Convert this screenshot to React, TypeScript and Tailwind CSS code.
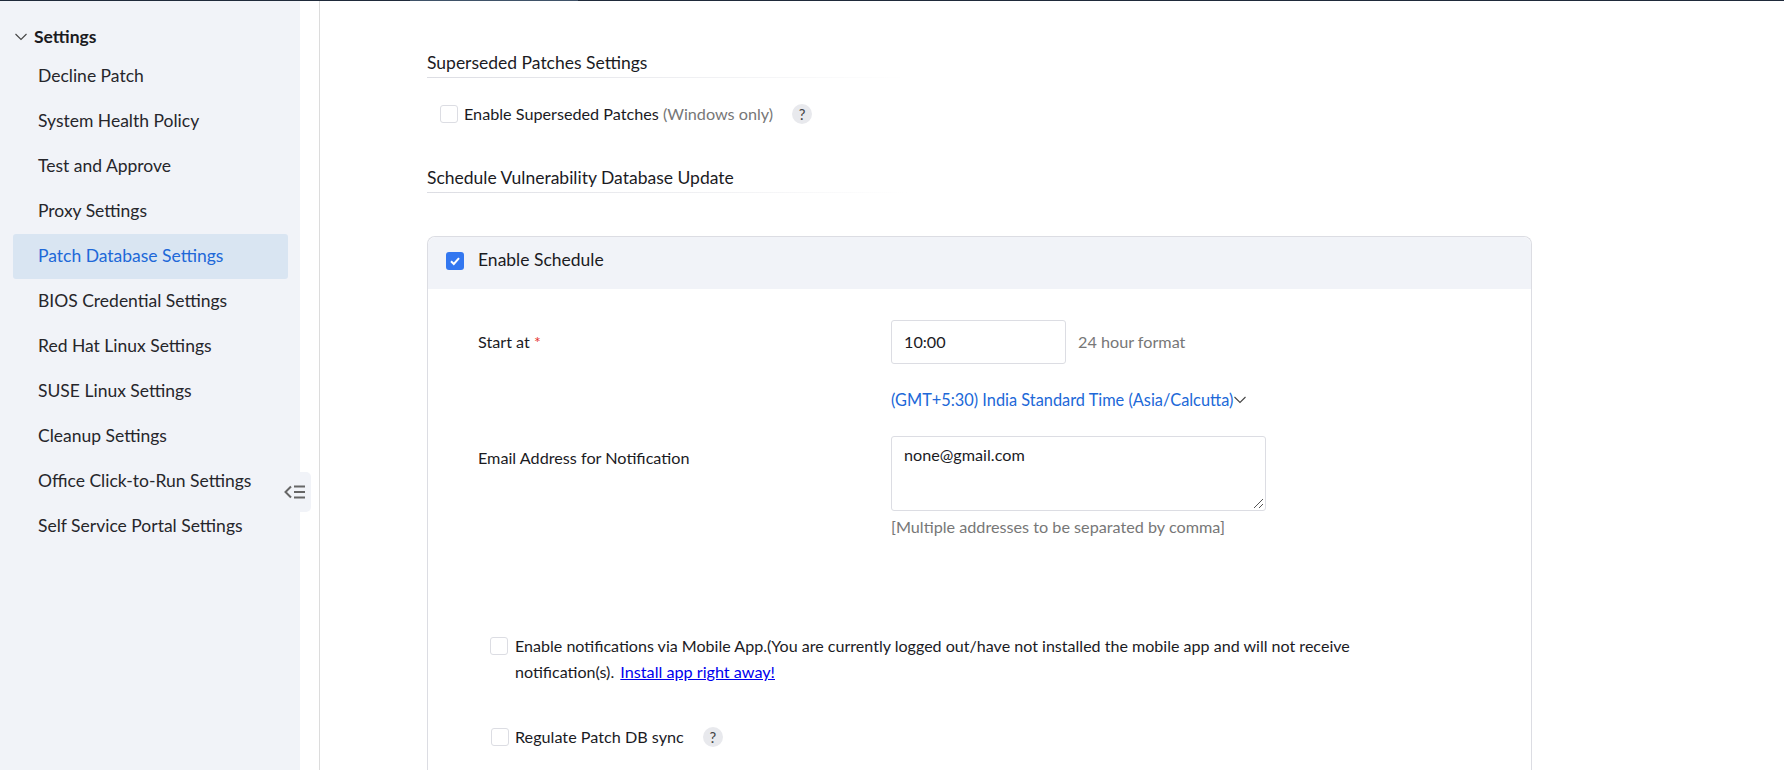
import React from "react";

const items = [
  "Decline Patch",
  "System Health Policy",
  "Test and Approve",
  "Proxy Settings",
  "Patch Database Settings",
  "BIOS Credential Settings",
  "Red Hat Linux Settings",
  "SUSE Linux Settings",
  "Cleanup Settings",
  "Office Click-to-Run Settings",
  "Self Service Portal Settings",
];

function Check({ className = "" }: { className?: string }) {
  return <span className={`block w-[18px] h-[18px] shrink-0 rounded-[3px] border border-[#dcdde3] bg-white ${className}`} />;
}

function Help() {
  return (
    <span className="flex h-5 w-5 shrink-0 items-center justify-center rounded-full bg-[#e8e9ed] text-[15px] text-[#444]">?</span>
  );
}

function Heading({ children, mt }: { children: React.ReactNode; mt: string }) {
  return (
    <div className={`${mt} w-[480px]`}>
      <h2 className="h-[27px] pt-[1px] text-[17.5px] leading-[24px] text-[#1b1b1f]">{children}</h2>
      <div className="h-px bg-gradient-to-r from-[#dcdde3] to-white" />
    </div>
  );
}

export default function App() {
  return (
    <div className="flex h-[770px] w-full flex-col overflow-hidden bg-white font-[Lato,sans-serif] text-[16.2px] text-[#1b1b1f]">
      <div className="flex h-px shrink-0 bg-[#1f2a3a]">
        <div className="ml-[410px] w-[168px] bg-[#3f5268]" />
      </div>
      <div className="flex min-h-0 flex-1">
        <aside className="relative w-[300px] shrink-0 bg-[#f1f3f8] px-[13px] pt-[23px]">
          <div className="flex h-[26px] items-center gap-[8px] pl-[1px] text-[17.5px] font-bold leading-[26px] text-[#1b1b1f]">
            <svg width="14" height="14" viewBox="0 0 14 14" fill="none" stroke="#444" strokeWidth="1.1">
              <path d="M1.5 4 L7 9.5 L12.5 4" />
            </svg>
            <span className="-ml-[2px]">Settings</span>
          </div>
          <ul className="mt-[4px] w-[275px]">
            {items.map((t) => (
              <li
                key={t}
                className={`flex h-[45px] items-center rounded-[3px] pl-[25px] text-[17.5px] ${
                  t === "Patch Database Settings" ? "bg-[#d9e5f2] text-[#2068d8]" : "text-[#26262b]"
                }`}
              >
                {t}
              </li>
            ))}
          </ul>
          <div className="absolute left-[284px] top-[471px] flex h-[40px] w-[27px] items-center justify-end rounded-r-[5px] bg-[#f1f3f8] pr-[6px]">
            <svg width="21" height="16" viewBox="0 0 21 16" fill="none" stroke="#666" strokeWidth="2">
              <path d="M7 2.5 L1.5 8 L7 13.5" />
              <path d="M10 2.5 H21 M10 8 H21 M10 13.5 H21" />
            </svg>
          </div>
        </aside>
        <main className="ml-[19px] min-w-0 flex-1 border-l border-[#dcdcdc] pl-[107px]">
          <Heading mt="mt-[49px]">Superseded Patches Settings</Heading>
          <div className="ml-[13px] mt-[26px] flex h-[20px] items-center">
            <Check />
            <span className="ml-[6px]">
              Enable Superseded Patches <span className="text-[#777]">(Windows only)</span>
            </span>
            <span className="ml-[19px]">
              <Help />
            </span>
          </div>
          <Heading mt="mt-[41px]">Schedule Vulnerability Database Update</Heading>
          <section className="mt-[43px] h-[800px] w-[1105px] rounded-t-[8px] border border-b-0 border-[#dcdde3]">
            <div className="flex h-[52px] items-center rounded-t-[8px] bg-[#f1f3f8] pb-[5px] pl-[18px]">
              <span className="flex h-[18px] w-[18px] items-center justify-center rounded-[3px] bg-[#3377f0]">
                <svg width="12" height="12" viewBox="0 0 12 12" fill="none" stroke="#fff" strokeWidth="2">
                  <path d="M2 6.2 L4.8 9 L10 3.2" />
                </svg>
              </span>
              <span className="ml-[14px] text-[17.5px]">Enable Schedule</span>
            </div>
            <div className="pl-[50px]">
              <div className="mt-[31px] flex h-[44px] items-center">
                <span className="w-[413px]">
                  Start at <span className="text-[#e5352e]">*</span>
                </span>
                <span className="flex h-[44px] w-[175px] items-center rounded-[3px] border border-[#dcdde3] pl-[12px]">10:00</span>
                <span className="ml-[12px] text-[#777]">24 hour format</span>
              </div>
              <div className="ml-[413px] mt-[25px] flex h-[22px] items-center text-[16.35px] text-[#2068d8]">
                (GMT+5:30) India Standard Time (Asia/Calcutta)
                <svg width="14" height="14" viewBox="0 0 14 14" fill="none" stroke="#444" strokeWidth="1.1">
                  <path d="M1.5 4 L7 9.5 L12.5 4" />
                </svg>
              </div>
              <div className="mt-[25px] flex">
                <span className="mt-[10px] w-[413px]">Email Address for Notification</span>
                <div>
                  <div className="relative h-[75px] w-[375px] rounded-[3px] border border-[#dcdde3] pl-[12px] pt-[7px] leading-[22px]">
                    none@gmail.com
                    <svg className="absolute bottom-[1px] right-[1px]" width="12" height="12" viewBox="0 0 12 12" stroke="#555" strokeWidth="1">
                      <path d="M2 11 L11 2 M7 11 L11 7" />
                    </svg>
                  </div>
                  <div className="mt-[5px] leading-[22px] text-[#777]">[Multiple addresses to be separated by comma]</div>
                </div>
              </div>
              <div className="ml-[12px] mt-[98px] flex w-[880px]">
                <Check className="mt-[1px]" />
                <p className="-mt-[3px] ml-[7px] text-[16.07px] leading-[26px]">
                  Enable notifications via Mobile App.(You are currently logged out/have not installed the mobile app and will not receive
                  notification(s).{" "}
                  <a href="#" className="ml-[2px] text-[16.2px] text-[#0000ee] underline">Install app right away!</a>
                </p>
              </div>
              <div className="ml-[13px] mt-[42px] flex h-[20px] items-center">
                <Check />
                <span className="ml-[6px]">Regulate Patch DB sync</span>
                <span className="ml-[19px]">
                  <Help />
                </span>
              </div>
            </div>
          </section>
        </main>
      </div>
    </div>
  );
}
